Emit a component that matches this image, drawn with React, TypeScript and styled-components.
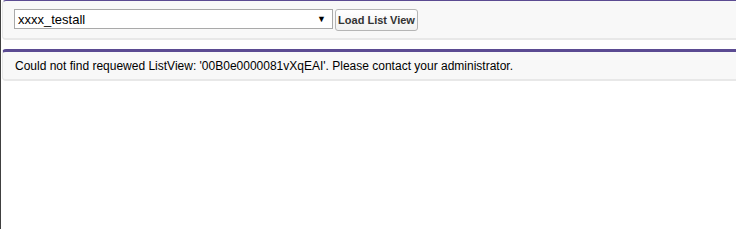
import styled, { createGlobalStyle } from "styled-components";

const GlobalStyle = createGlobalStyle`
    html, body {
        margin: 0;
        padding: 0;
        background: #ffffff;
        font-family: "Liberation Sans", Arial, sans-serif;
    }
`

const Page = styled.div`
    min-height: 229px;
    border-left: 1px solid #404040;
    padding-left: 1px;
    box-sizing: border-box;
    display: flex;
    flex-direction: column;
    gap: 9px;
    overflow: hidden;
`

const Panel = styled.div<{ $topBorder: number }>`
    margin-right: -8px;
    background-color: #f8f8f8;
    border-top: ${p => p.$topBorder}px solid #5b4b92;
    border-left: 1px solid #e6e6e6;
    border-bottom: 2px solid #e8e8e8;
    border-radius: 4px;
    box-sizing: border-box;
`

const Toolbar = styled.div`
    height: 37px;
    display: flex;
    align-items: flex-start;
    padding: 8px 0 0 11px;
    box-sizing: border-box;
    gap: 2px;
`

const SelectBox = styled.div`
    width: 319px;
    height: 20px;
    box-sizing: border-box;
    border: 1px solid #a9a9a9;
    background: #ffffff;
    display: flex;
    align-items: center;
    justify-content: space-between;
    padding: 0 6px 0 3px;
    font-size: 13px;
    color: #000000;
`

const Arrow = styled.span`
    font-size: 9px;
    color: #000;
`

const Button = styled.button`
    width: 83px;
    height: 22px;
    box-sizing: border-box;
    padding: 0;
    border: 1px solid #b5b5b5;
    border-radius: 3px;
    background: linear-gradient(#ffffff, #f1f1f1);
    font-family: "Liberation Sans", Arial, sans-serif;
    font-size: 11px;
    font-weight: bold;
    color: #333333;
    white-space: nowrap;
`

const Message = styled.div`
    height: 27px;
    display: flex;
    align-items: center;
    padding-left: 12px;
    font-size: 12px;
    color: #000000;
`

export default function App() {
    return (
        <>
            <GlobalStyle />
            <Page>
                <Panel $topBorder={1}>
                    <Toolbar>
                        <SelectBox>
                            <span>xxxx_testall</span>
                            <Arrow>▼</Arrow>
                        </SelectBox>
                        <Button>Load List View</Button>
                    </Toolbar>
                </Panel>
                <Panel $topBorder={3}>
                    <Message>Could not find requewed ListView: '00B0e0000081vXqEAI'. Please contact your administrator.</Message>
                </Panel>
            </Page>
        </>
    )
}
